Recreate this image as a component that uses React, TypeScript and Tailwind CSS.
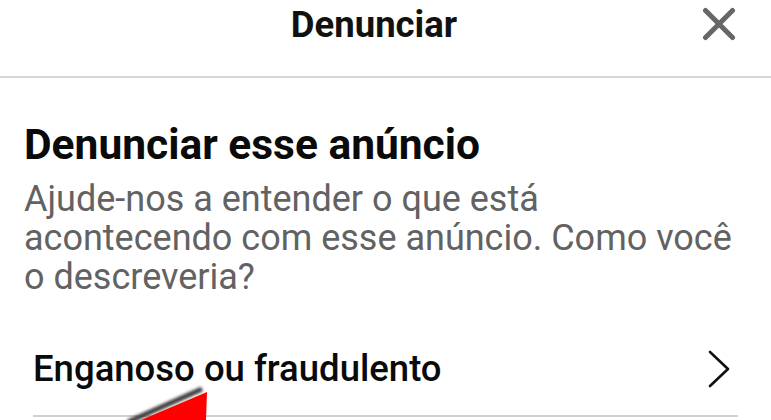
const font = { fontFamily: 'Roboto, "Noto Sans", sans-serif' };

function CloseIcon() {
  return (
    <svg width="34" height="34" viewBox="0 0 34 34" className="block">
      <path d="M3.5 3.5 L30.5 30.5 M30.5 3.5 L3.5 30.5" stroke="#666666" strokeWidth="5" strokeLinecap="round" />
    </svg>
  );
}

function Chevron() {
  return (
    <svg width="24" height="38" viewBox="0 0 24 38" className="block">
      <polyline points="3,2 21,19 3,36" fill="none" stroke="#111111" strokeWidth="2.6" strokeLinecap="round" strokeLinejoin="round" />
    </svg>
  );
}

function RedArrow() {
  return (
    <svg
      width="110"
      height="40"
      viewBox="0 0 110 40"
      className="pointer-events-none absolute left-[110px] top-[380px]"
    >
      <defs>
        <filter id="blur" x="-20%" y="-50%" width="140%" height="200%">
          <feGaussianBlur stdDeviation="1.6" />
        </filter>
      </defs>
      <line x1="18" y1="42" x2="92" y2="9" stroke="#3a3a3a" strokeWidth="5" filter="url(#blur)" />
      <polygon points="97,12 96,40 31,40" fill="#ff0000" />
    </svg>
  );
}

export default function App() {
  return (
    <div className="relative h-[420px] w-[771px] overflow-hidden bg-white" style={font}>
      {/* Header */}
      <div className="h-[78px] border-b-2 border-[#d6d6d6]">
        <div className="grid h-[50px] grid-cols-[1fr_auto_1fr] items-center pr-[23px]">
          <div />
          <div className="text-[36.5px] font-bold leading-none text-[#111111]">Denunciar</div>
          <div className="flex justify-end">
            <div className="mr-[12px] mt-[-2px]">
              <CloseIcon />
            </div>
          </div>
        </div>
      </div>

      {/* Body */}
      <div className="px-[24px] pt-[43px]">
        <h1 className="text-[42.5px] font-bold leading-[48px] text-[#0a0a0a]">Denunciar esse anúncio</h1>
        <p className="mt-[11px] text-[36px] leading-[39px] text-[#626262]">
          Ajude-nos a entender o que está
          <br />
          acontecendo com esse anúncio. Como você
          <br />o descreveria?
        </p>
      </div>

      {/* Options */}
      <div className="mx-[33px] mt-[26px]">
        <div className="flex items-center justify-between border-b-2 border-[#d0d0d0] py-[25px]">
          <span className="text-[36.5px] font-medium leading-[42px] text-[#0a0a0a]">Enganoso ou fraudulento</span>
          <div className="mr-[7px]">
            <Chevron />
          </div>
        </div>
      </div>

      <RedArrow />
    </div>
  );
}
